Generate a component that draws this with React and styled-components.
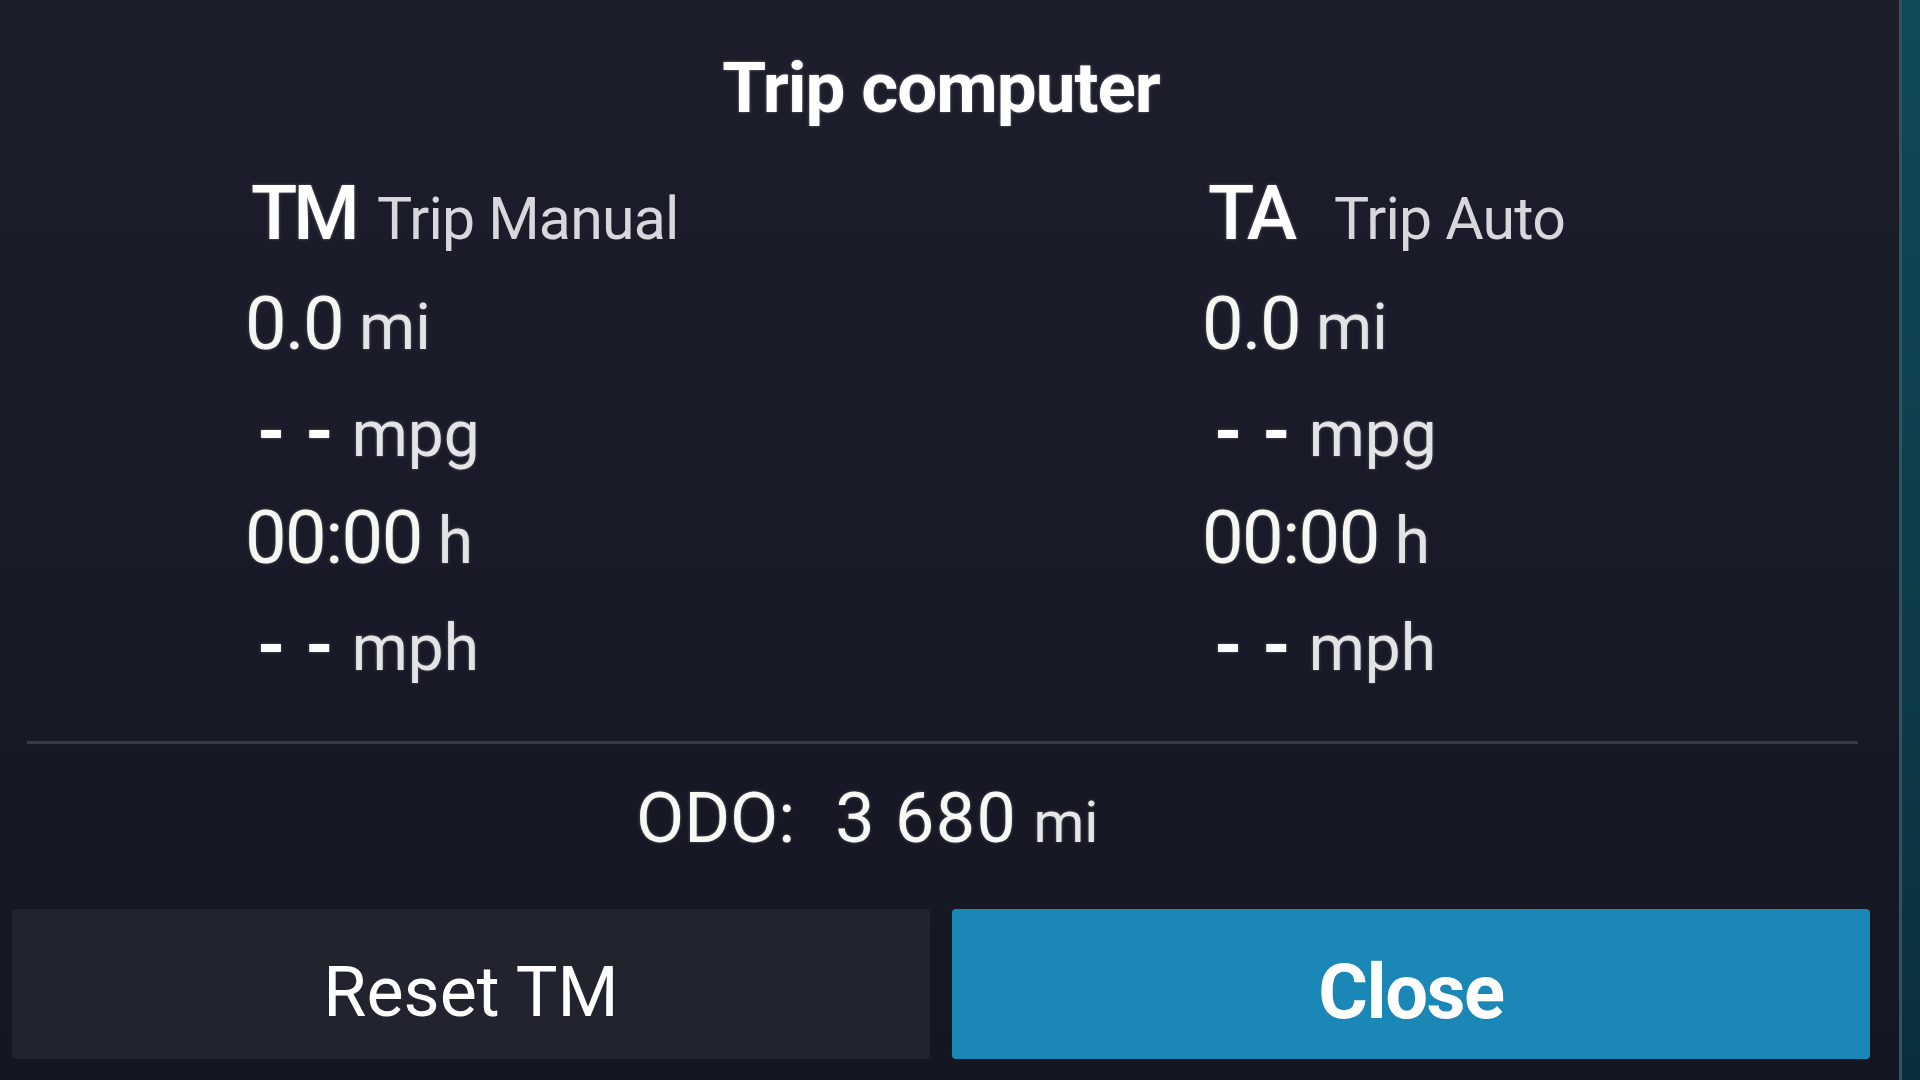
import React from "react";
import styled, { createGlobalStyle } from "styled-components";

const trips = [
  { code: "TM", name: "Trip Manual", distance: "0.0", time: "00:00" },
  { code: "TA", name: "Trip Auto", distance: "0.0", time: "00:00" },
];

const App = () => {
  return (
    <Screen>
      <GlobalStyle />
      <Panel>
        <Title>Trip computer</Title>
        <Trips>
          {trips.map((trip) => (
            <TripColumn key={trip.code}>
              <TripHeader>
                <Code>{trip.code}</Code>
                <Name>{trip.name}</Name>
              </TripHeader>
              <ValueRow>
                {trip.distance}
                <Unit> mi</Unit>
              </ValueRow>
              <ValueRow>
                <Dashes>- -</Dashes>
                <Unit>mpg</Unit>
              </ValueRow>
              <ValueRow>
                {trip.time}
                <Unit> h</Unit>
              </ValueRow>
              <ValueRow>
                <Dashes>- -</Dashes>
                <Unit>mph</Unit>
              </ValueRow>
            </TripColumn>
          ))}
        </Trips>
        <Divider />
        <Odometer>
          <OdoLabel>ODO:</OdoLabel>
          <OdoValue>3 680</OdoValue>
          <OdoUnit>mi</OdoUnit>
        </Odometer>
        <Actions>
          <ActionButton>Reset TM</ActionButton>
          <ActionButton $primary>Close</ActionButton>
        </Actions>
      </Panel>
    </Screen>
  );
};

const GlobalStyle = createGlobalStyle`
  html, body {
    margin: 0;
    padding: 0;
  }
  body {
    background: #0b2f39;
    font-family: Roboto, "Liberation Sans", Arial, sans-serif;
  }
`;

const Screen = styled.div`
  width: 1920px;
  height: 1080px;
  display: flex;
  overflow: hidden;
  background: linear-gradient(180deg, #11495a 0%, #0d3b48 60%, #0a2f3a 100%);
`;

const Panel = styled.div`
  width: 1902px;
  box-sizing: border-box;
  display: flex;
  flex-direction: column;
  padding: 48px 29px 21px 12px;
  background: linear-gradient(180deg, #1c1f2b 0%, #181b27 55%, #141722 100%);
  border-right: 3px solid #2f5561;
  color: #f4f4f0;
`;

const Title = styled.h1`
  margin: 0;
  height: 80px;
  line-height: 80px;
  font-size: 71px;
  font-weight: 700;
  letter-spacing: -1px;
  text-align: center;
  color: #ffffff;
  text-shadow: 0 0 3px rgba(255, 255, 255, 0.35);
`;

const Trips = styled.div`
  display: grid;
  grid-template-columns: 957px 1fr;
  padding-left: 233px;
  margin-top: 45px;
`;

const TripColumn = styled.div`
  display: flex;
  flex-direction: column;
`;

const TripHeader = styled.div`
  height: 80px;
  line-height: 80px;
  font-size: 76px;
  white-space: nowrap;
  margin-bottom: 17px;
`;

const Code = styled.span`
  display: inline-block;
  width: 132px;
  box-sizing: border-box;
  padding-left: 6px;
  font-weight: 500;
  letter-spacing: -4px;
  color: #ffffff;
  text-shadow: 0 0 3px rgba(255, 255, 255, 0.35);
`;

const Name = styled.span`
  font-size: 59px;
  line-height: 1;
  letter-spacing: -0.8px;
  color: #d6d8dc;
`;

const ValueRow = styled.div`
  height: 107px;
  line-height: 107px;
  font-size: 74px;
  white-space: pre;
  letter-spacing: -1.5px;
  color: #f6f6f2;
  text-shadow: 0 0 3px rgba(255, 255, 255, 0.3);
`;

const Unit = styled.span`
  font-size: 64px;
  line-height: 1;
  letter-spacing: 0;
  color: #e4e4e6;
`;

const Dashes = styled.span`
  display: inline-block;
  margin: 0 17px 0 12px;
  font-size: 72px;
  font-weight: 700;
  letter-spacing: 1px;
  line-height: 1;
  color: #ffffff;
`;

const Divider = styled.div`
  height: 3px;
  margin: 43px 12px 0 15px;
  background: #373a45;
`;

const Odometer = styled.div`
  margin-top: 34px;
  height: 80px;
  line-height: 80px;
  padding-left: 624px;
  font-size: 70px;
  white-space: pre;
  color: #f8f8f4;
  text-shadow: 0 0 3px rgba(255, 255, 255, 0.3);
`;

const OdoLabel = styled.span`
  margin-right: 40px;
`;

const OdoValue = styled.span`
  letter-spacing: 1.5px;
`;

const OdoUnit = styled.span`
  margin-left: 16px;
  font-size: 58px;
  line-height: 1;
  color: #e6e6e6;
`;

const Actions = styled.div`
  margin-top: 51px;
  display: grid;
  grid-template-columns: 1fr 1fr;
  gap: 22px;
  height: 151px;
`;

const ActionButton = styled.button`
  display: flex;
  align-items: center;
  justify-content: center;
  padding: 16px 0 0;
  border: none;
  border-radius: 4px;
  font-family: inherit;
  font-size: ${(props) => (props.$primary ? "76px" : "70px")};
  font-weight: ${(props) => (props.$primary ? 700 : 400)};
  letter-spacing: ${(props) => (props.$primary ? "-1.5px" : "0px")};
  line-height: 1;
  color: #ffffff;
  background: ${(props) => (props.$primary ? "#1a87b6" : "#21242f")};
  cursor: pointer;
`;

export default App;
